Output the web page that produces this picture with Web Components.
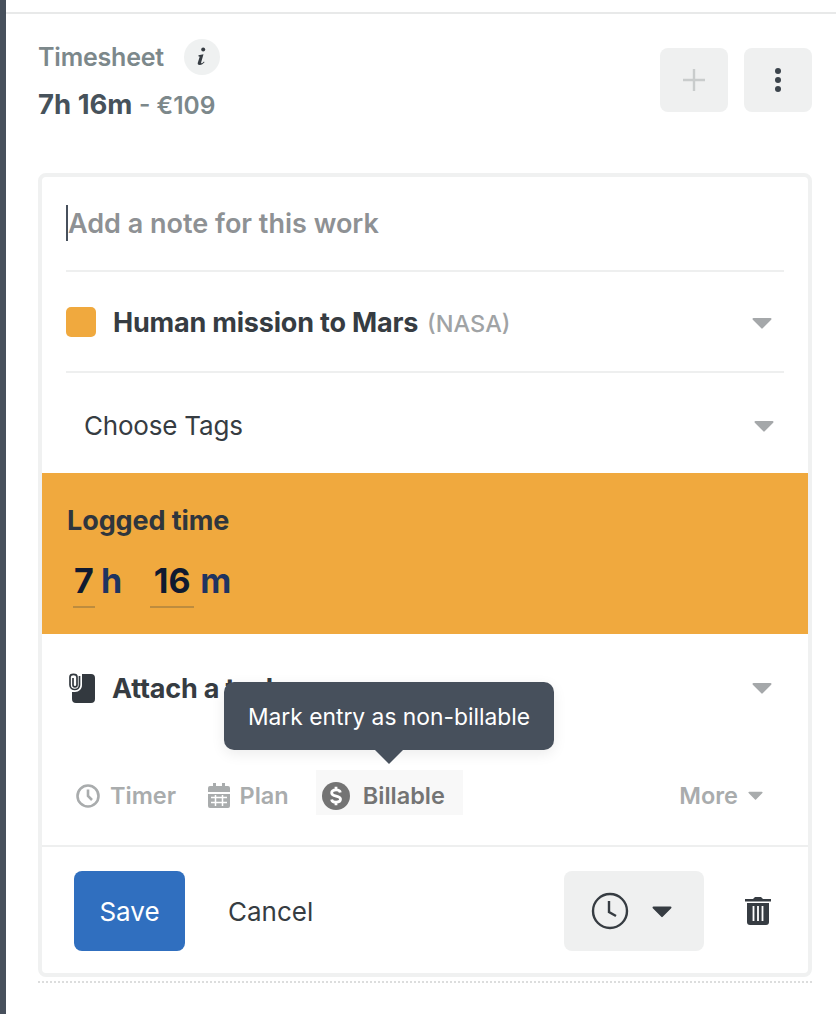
<!doctype html>
<html>
<head>
<meta charset="utf-8">
<style>
	html, body { margin: 0; padding: 0; background: #fff; }
	body { font-family: "Inter", "Liberation Sans", sans-serif; color: #363c42; }
</style>
</head>
<body>
<timesheet-panel>
	<timesheet-header slot="header" title="Timesheet" total="7h 16m" amount="€109"></timesheet-header>
	<entry-card>
		<note-row></note-row>
		<project-row></project-row>
		<tags-row></tags-row>
		<logged-time></logged-time>
		<attach-row></attach-row>
		<action-row></action-row>
		<footer-row></footer-row>
	</entry-card>
</timesheet-panel>

<script>
'use strict';

const caret = (w, h, color) => `<svg width="${w}" height="${h}" viewBox="0 0 20 12"><path d="M1.500 1h17a1 1 0 0 1 .7 1.700l-8.500 8.600a1 1 0 0 1-1.400 0L.8 2.700A1 1 0 0 1 1.500 1z" fill="${color}"/></svg>`;

function define(name, css, html) {
	customElements.define(name, class extends HTMLElement {
		constructor() {
			super();
			const root = this.attachShadow({ mode: 'open' });
			root.innerHTML = `<style>${css}</style>${typeof html === 'function' ? html(this) : html}`;
		}
	});
}

define('timesheet-panel', `
	:host { display: block; height: 1014px; box-sizing: border-box; border-left: 6px solid #47505c; overflow: hidden; }
	.top { height: 12px; border-bottom: 2px solid #e8e9e9; }
	.body { padding: 0 24px 0 32px; }
	.dots { height: 2px; margin-top: 4px; background: repeating-linear-gradient(90deg, #dcdddd 0 2px, transparent 2px 4px); }
`, `<div class="top"></div><div class="body"><slot name="header"></slot><slot></slot><div class="dots"></div></div>`);

define('timesheet-header', `
	:host { display: flex; justify-content: space-between; height: 159px; box-sizing: border-box; padding-top: 25px; }
	.title { display: flex; align-items: center; gap: 20px; height: 36px; color: #7c888b; font-size: 25px; font-weight: 600; letter-spacing: -.2px; }
	.info { width: 36px; height: 36px; border-radius: 50%; background: #eff1f1; display: flex; align-items: center; justify-content: center; }
	.sum { margin-top: 12px; font-size: 27.500px; line-height: 34px; font-weight: 700; color: #47525b; white-space: nowrap; }
	.sum span { font-size: 24.500px; font-weight: 600; color: #7c888b; letter-spacing: 0; }
	.btns { display: flex; gap: 16px; padding-top: 9px; }
	.btn { width: 68px; height: 64px; border-radius: 8px; background: #eff0f0; display: flex; align-items: center; justify-content: center; }
`, (el) => `
	<div>
		<div class="title">${el.getAttribute('title')}
			<span class="info"><svg width="12" height="20" viewBox="0 0 12 20"><circle cx="7.200" cy="2.400" r="2" fill="#363c42"/><path d="M2.500 8.200 7.500 7.200 5.100 15.500c-.2.800.5 1 1.300.4l1.600-1.300.5.600C7 16.800 5.600 18 3.700 18c-1.500 0-2.300-1-1.900-2.300L3.700 9.800 2.400 9.300z" fill="#363c42"/></svg></span>
		</div>
		<div class="sum">${el.getAttribute('total')} <span>- ${el.getAttribute('amount')}</span></div>
	</div>
	<div class="btns">
		<div class="btn"><svg width="22" height="22" viewBox="0 0 22 22"><path d="M11 0v22M0 11h22" stroke="#c9cccc" stroke-width="2.400"/></svg></div>
		<div class="btn"><svg width="6" height="24" viewBox="0 0 6 24"><circle cx="3" cy="3" r="3" fill="#3c444c"/><circle cx="3" cy="12" r="3" fill="#3c444c"/><circle cx="3" cy="21" r="3" fill="#3c444c"/></svg></div>
	</div>
`);

define('entry-card', `
	:host { display: block; width: 774px; height: 804px; box-sizing: border-box; border: 4px solid #f0f1f1; border-radius: 8px; background: #fff; }
`, `<slot></slot>`);

define('note-row', `
	:host { display: block; margin: 0 24px; height: 95px; box-sizing: border-box; border-bottom: 2px solid #eeefef; padding-top: 28px; }
	.t { display: flex; align-items: center; height: 36px; font-size: 27px; font-weight: 600; color: #8e9194; white-space: nowrap; }
	i { width: 2px; height: 36px; background: #47505c; }
`, `<div class="t"><i></i>Add a note for this work</div>`);

define('project-row', `
	:host { display: flex; align-items: center; margin: 0 24px; height: 101px; box-sizing: border-box; border-bottom: 2px solid #eeefef; }
	.sq { width: 30px; height: 30px; border-radius: 5px; background: #f0a93e; margin-right: 17px; }
	b { font-size: 27px; line-height: 34px; padding-top: 2px; font-weight: 700; color: #363c42; letter-spacing: -.2px; }
	span { margin-left: 9px; padding-top: 3px; font-size: 23.500px; font-weight: 500; color: #a0a3a5; }
	svg { margin: 2px 12px 0 auto; }
`, `<div class="sq"></div><b>Human mission to Mars</b><span>(NASA)</span>${caret(20, 12, '#a5a8aa')}`);

define('tags-row', `
	:host { display: flex; align-items: center; height: 100px; padding: 0 34px 0 42px; font-size: 26px; letter-spacing: -.2px; color: #363c42; }
	span { padding-top: 4px; }
	svg { margin: 5px 0 0 auto; }
`, `<span>Choose Tags</span>${caret(20, 12, '#a5a8aa')}`);

define('logged-time', `
	:host { display: block; height: 161px; box-sizing: border-box; background: #f0a93e; padding: 31px 25px 0; }
	.l { font-size: 27px; line-height: 34px; font-weight: 700; color: #2f363d; letter-spacing: -.1px; }
	.v { display: flex; align-items: baseline; margin-top: 21px; font-size: 34px; line-height: 44px; font-weight: 700; color: #1f3460; }
	.f { display: inline-block; text-align: center; color: #101a30; box-shadow: 0 2px 0 #bd8c3e; padding-bottom: 3px; }
`, `<div class="l">Logged time</div><div class="v"><span class="f" style="width:22px;margin-left:6px">7</span><span style="margin-left:6px">h</span><span class="f" style="width:44px;margin-left:28px">16</span><span style="margin-left:6px">m</span></div>`);

define('attach-row', `
	:host { display: flex; align-items: center; height: 108px; box-sizing: border-box; padding: 0 36px 0 25px; }
	b { margin-left: 17px; font-size: 27px; font-weight: 700; color: #363c42; letter-spacing: -.2px; }
	.caret { margin-left: auto; }
`, `<svg width="28" height="30" viewBox="0 0 28 30"><path d="M15 1h9a4 4 0 0 1 4 4v21a4 4 0 0 1-4 4H9a4 4 0 0 1-4-4v-7h3c4 0 7-3 7-7V1z" fill="#33393f"/><path d="M6 5v7c0 2.500 4 2.500 4 0V4C10 .5 3 .5 3 4v8c0 6 9.500 6 9.500 0V3" fill="none" stroke="#33393f" stroke-width="1.700"/></svg><b>Attach a task</b>${caret(20, 12, '#a5a8aa').replace('<svg', '<svg class="caret"')}`);

define('action-row', `
	:host { display: flex; align-items: center; position: relative; height: 105px; box-sizing: border-box; padding: 4px 45px 0 34px; border-bottom: 2px solid #eeefef; font-size: 23.500px; font-weight: 600; color: #a9acad; }
	.a { display: flex; align-items: center; gap: 10px; }
	.plan { margin-left: 31.500px; }
	.bill { margin: 0 0 6px 27px; width: 147px; height: 45px; box-sizing: border-box; padding: 6px 0 0 6px; gap: 13px; background: #f8f8f8; color: #747474; }
	.more { margin-left: auto; }
	.tip { position: absolute; left: 182px; top: -60px; width: 330px; height: 68px; border-radius: 10px; background: #47505c; color: #fff; font-size: 22.800px; font-weight: 400; display: flex; align-items: center; justify-content: center; box-shadow: 0 4px 14px rgba(0,0,0,.08); white-space: nowrap; }
	.tip::after { content: ""; position: absolute; left: 151px; top: 68px; border: 14px solid transparent; border-top-color: #47505c; border-bottom: 0; }
`, `
	<div class="a"><svg width="24" height="24" viewBox="0 0 24 24" fill="none" stroke="#a9acad" stroke-width="2.600"><circle cx="12" cy="12" r="10.500"/><path d="M12 5.500V12l4 4"/></svg>Timer</div>
	<div class="a plan"><svg width="22" height="25" viewBox="0 0 22 25"><path d="M5 0h3v3h6V0h3v3h3a2 2 0 0 1 2 2v4H0V5a2 2 0 0 1 2-2h3zM0 11h22v12a2 2 0 0 1-2 2H2a2 2 0 0 1-2-2z" fill="#a9acad"/><path d="M3 14.500h16M3 19.500h16M7.500 12v11M14.500 12v11" stroke="#fff" stroke-width="1.500"/></svg>Plan</div>
	<div class="a bill"><svg width="28" height="28" viewBox="0 0 28 28"><circle cx="14" cy="14" r="14" fill="#747474"/><path d="M18.300 10.400C18 8.700 16.200 7.800 14 7.800c-2.500 0-4.300 1.200-4.300 3.100 0 4.300 8.800 2.100 8.800 6.200 0 1.900-1.900 3.100-4.400 3.100-2.400 0-4.200-1-4.500-2.800M14 4.800v3M14 20.200v3" fill="none" stroke="#fff" stroke-width="2.800"/></svg>Billable</div>
	<div class="a more">More${caret(15, 9, '#a9acad')}</div>
	<div class="tip">Mark entry as non-billable</div>
`);

define('footer-row', `
	:host { display: flex; align-items: center; height: 126px; box-sizing: border-box; padding: 2px 32px 0; font-size: 26px; color: #363c42; }
	.save { width: 111px; height: 80px; border-radius: 8px; background: #306fbf; color: #fff; display: flex; align-items: center; justify-content: center; }
	.cancel { margin-left: 43px; }
	.time { margin-left: auto; width: 140px; height: 80px; box-sizing: border-box; padding-right: 5px; border-radius: 8px; background: #eff0f0; display: flex; align-items: center; justify-content: center; gap: 23px; }
	.trash { margin: 0 5px 3px 41px; display: block; }
`, `
	<div class="save">Save</div>
	<div class="cancel">Cancel</div>
	<div class="time"><svg width="38" height="38" viewBox="0 0 38 38" fill="none" stroke="#363c42" stroke-width="2.400"><circle cx="19" cy="19" r="17"/><path d="M18 9v11l7 4"/></svg>${caret(20, 13, '#363c42')}</div>
	<svg class="trash" width="26" height="30" viewBox="0 0 26 30"><path d="M0 4h8l2-2h6l2 2h8v2.500H0z" fill="#363c42"/><path d="M2 8h22v19a3 3 0 0 1-3 3H5a3 3 0 0 1-3-3z" fill="#363c42"/><path d="M8.500 11v15M13 11v15M17.500 11v15" stroke="#fff" stroke-width="1.800"/></svg>
`);
</script>
</body>
</html>
